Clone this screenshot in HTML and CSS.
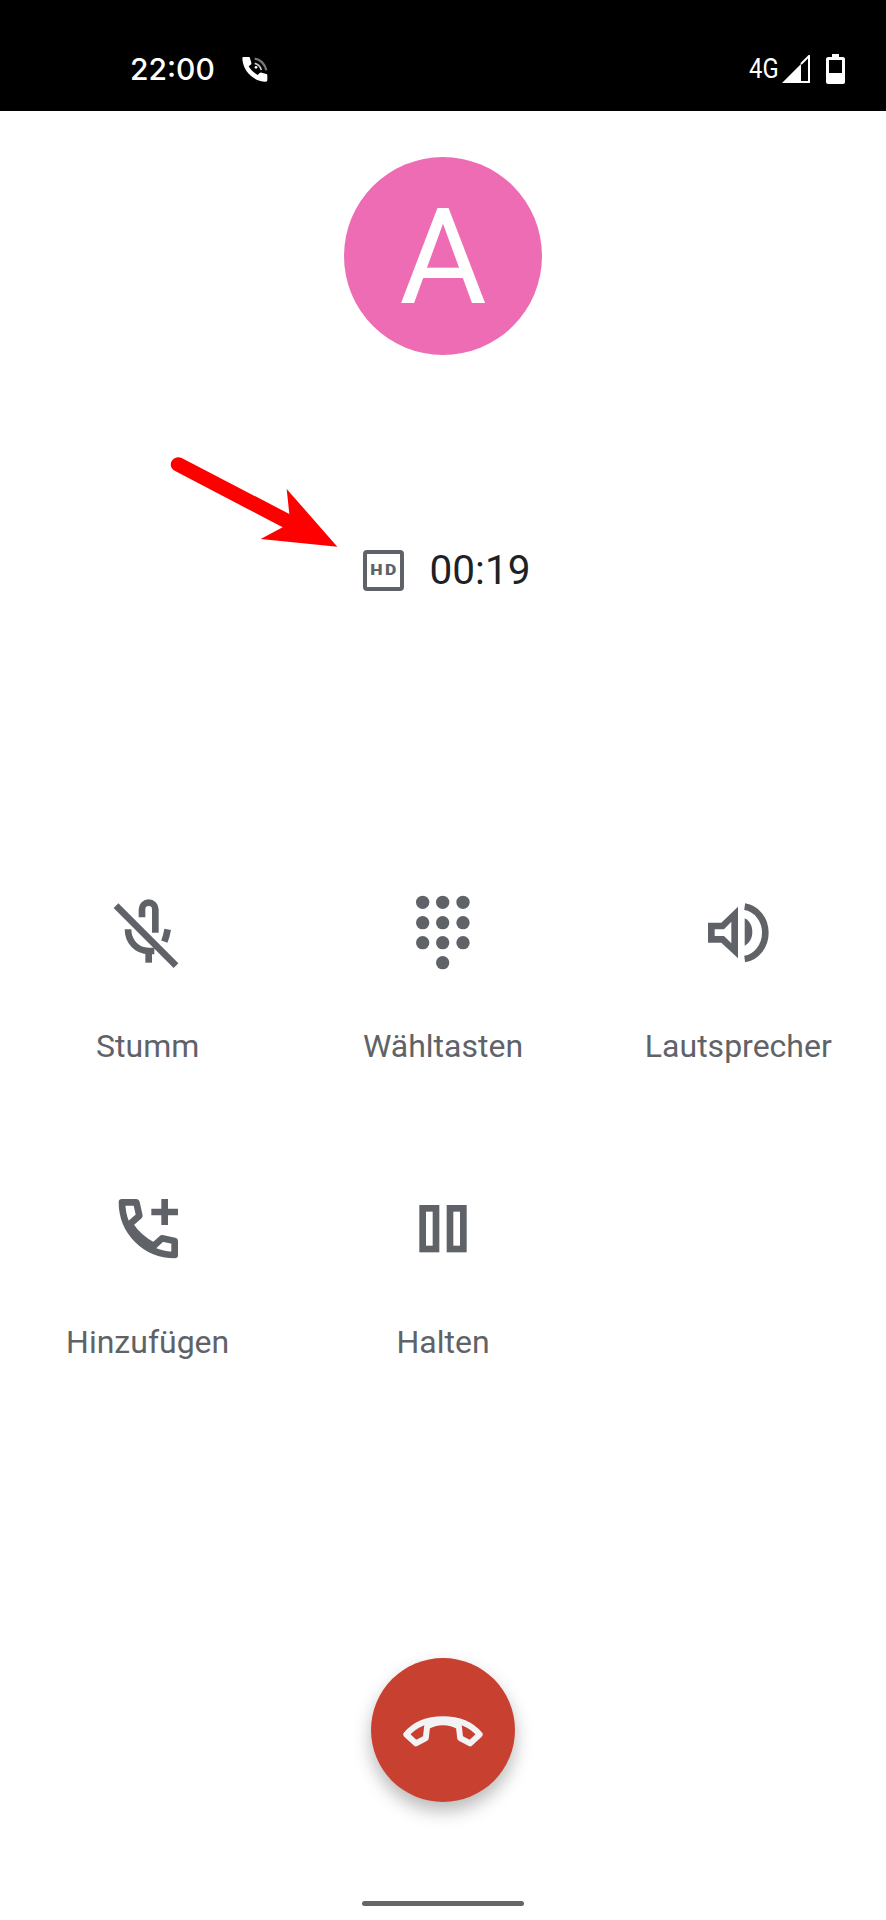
FILE: index.html
```html
<!DOCTYPE html>
<html lang="de">
<head>
<meta charset="utf-8">
<title>Anruf</title>
<link rel="stylesheet" href="styles.css">
</head>
<body>
<div class="page">
  <header class="status">
    <div class="status-left">
      <span class="clock">22:00</span>
      <svg class="call-ind" viewBox="0 0 78 78">
        <path class="ind-fill" d="M4 3 H20 C23 3 24 5 24 7 L28 20 C29 23 27 25 25 27 L20 31 C26 42 36 51 47 57 L53 51 C55 49 57 49 59 50 L73 54 C76 55 76 57 76 59 V72 C76 75 74 77 71 77 C33 76 2 44 1 7 C1 5 2 3 4 3 Z"/>
        <path class="ind-dim" d="M38 8 C55 10 69 24 73 43"/>
        <path class="ind-mid" d="M38 22 C47 24 55 31 58 42"/>
        <circle class="ind-dot" cx="42" cy="34" r="4"/>
      </svg>
    </div>
    <div class="status-right">
      <span class="net">4G</span>
      <svg class="signal" viewBox="0 0 28 28">
        <path class="sig-fill" d="M0 28 L19 9 V28 Z"/>
        <path class="sig-line" d="M19 9 L27 1 V27 H19"/>
      </svg>
      <svg class="battery" viewBox="0 0 19 30">
        <path class="bat-fill" d="M6 0 H13 V3 H17 C18 3 19 4 19 5 V28 C19 29 18 30 17 30 H2 C1 30 0 29 0 28 V5 C0 4 1 3 2 3 H6 Z M3 6 V19 H16 V6 Z"/>
      </svg>
    </div>
  </header>

  <main class="call">
    <div class="avatar">A</div>

    <div class="timer-row">
      <span class="hd-badge"><span class="hd-text">HD</span></span>
      <span class="timer">00:19</span>
    </div>

    <section class="controls">
      <div class="control">
        <svg class="icon" viewBox="-7 0 360 360">
          <path class="st" d="M155 112 V88 a20 20 0 0 1 40 0 V158"/>
          <path class="st" d="M113 148 C113 185 140 213 175 213 H192"/>
          <path class="st" d="M232 148 C230 160 227 172 222 185"/>
          <path class="st" d="M175 213 V248"/>
          <path class="st" d="M77 77 L257 257"/>
        </svg>
        <span class="label">Stumm</span>
      </div>
      <div class="control">
        <svg class="icon" viewBox="-6 0 360 360">
          <circle class="dot" cx="113" cy="67" r="20"/><circle class="dot" cx="173" cy="67" r="20"/><circle class="dot" cx="234" cy="67" r="20"/>
          <circle class="dot" cx="113" cy="128" r="20"/><circle class="dot" cx="173" cy="128" r="20"/><circle class="dot" cx="234" cy="128" r="20"/>
          <circle class="dot" cx="113" cy="188" r="20"/><circle class="dot" cx="173" cy="188" r="20"/><circle class="dot" cx="234" cy="188" r="20"/>
          <circle class="dot" cx="173" cy="248" r="20"/>
        </svg>
        <span class="label">Wähltasten</span>
      </div>
      <div class="control">
        <svg class="icon" viewBox="-5 0 360 360">
          <path class="dot ev" d="M85 128 H125 L175 80 V235 L125 188 H85 Z M105 148 V168 H133 L155 190 V125 L133 148 Z"/>
          <path class="dot" d="M195 115 C210 122 218 138 218 156 C218 174 210 189 195 197 Z"/>
          <path class="st" d="M195 80 C230 85 257 118 257 158 C257 198 230 232 195 237"/>
        </svg>
        <span class="label">Lautsprecher</span>
      </div>
      <div class="control">
        <svg class="icon" viewBox="-7 18 360 360">
          <path class="st round" d="M95 97 H138 L147 137 L118 163 C135 190 160 212 190 228 L215 205 L253 213 V255 C165 255 95 185 95 97 Z"/>
          <path class="st" d="M223 87 V165 M183 126 H263"/>
        </svg>
        <span class="label">Hinzufügen</span>
      </div>
      <div class="control">
        <svg class="icon" viewBox="-6 18 360 360">
          <rect class="st" x="113" y="115" width="40" height="122"/>
          <rect class="st" x="195" y="115" width="40" height="122"/>
        </svg>
        <span class="label">Halten</span>
      </div>
    </section>

    <button class="hangup" type="button" aria-label="Auflegen">
      <svg class="hangup-icon" viewBox="160 230 300 130">
        <path class="hang-line" d="M199 307 C227 274 265 261 310 261 C355 261 393 274 421 307 L392 334 L362 318 L358 283 C330 266 290 266 262 283 L258 318 L228 334 Z"/>
      </svg>
    </button>

    <div class="home-bar"></div>
  </main>

  <svg class="arrow" viewBox="0 0 600 360">
    <path class="arrow-fill" d="M562 320 L410 147 L418 222 L95 54 C85 49 72 52 65 63 C59 74 63 87 74 92 L398 262 L332 297 Z"/>
  </svg>
</div>
</body>
</html>
```

FILE: styles.css
```css
* { box-sizing: border-box; }

html, body {
  margin: 0;
  padding: 0;
  background: #fff;
}

.page {
  position: relative;
  width: 886px;
  height: 1920px;
  overflow: hidden;
  font-family: Roboto, "Liberation Sans", sans-serif;
}

.status {
  height: 111px;
  background: #000;
  color: #fff;
  display: flex;
  align-items: center;
  justify-content: space-between;
  padding: 27px 41px 0 130px;
}

.status-left, .status-right {
  display: flex;
  align-items: center;
}

.clock {
  font-family: Inter, Roboto, sans-serif;
  font-size: 30px;
  font-weight: 500;
  line-height: 36px;
  width: 112px;
}

.call-ind {
  width: 26px;
  height: 26px;
}
.ind-fill { fill: #fff; }
.ind-dim { fill: none; stroke: #777; stroke-width: 7; }
.ind-mid { fill: none; stroke: #ccc; stroke-width: 5; }
.ind-dot { fill: #fff; }

.net {
  display: inline-block;
  font-size: 28px;
  line-height: 30px;
  width: 34px;
  margin-right: 4px;
  transform: scaleX(.85);
  transform-origin: 100% 50%;
}

.signal {
  width: 28px;
  height: 28px;
  margin-right: 16px;
}
.sig-fill { fill: #fff; }
.sig-line { fill: none; stroke: #fff; stroke-width: 2; }

.battery {
  width: 19px;
  height: 30px;
}
.bat-fill { fill: #fff; fill-rule: evenodd; }

.call {
  display: flex;
  flex-direction: column;
  align-items: center;
}

.avatar {
  width: 198px;
  height: 198px;
  margin-top: 46px;
  border-radius: 50%;
  background: #ee6cb4;
  color: #fff;
  font-size: 134px;
  font-weight: 400;
  line-height: 202px;
  text-align: center;
}

.timer-row {
  display: flex;
  align-items: center;
  gap: 26px;
  height: 48px;
  margin-top: 191px;
  margin-left: 7px;
}

.hd-badge {
  display: flex;
  align-items: center;
  justify-content: center;
  width: 41px;
  height: 41px;
  border: 4px solid #5f6368;
  border-radius: 4px;
  color: #5f6368;
}

.hd-text {
  display: inline-block;
  font-family: Roboto, sans-serif;
  font-size: 14px;
  font-weight: 900;
  line-height: 14px;
  letter-spacing: 2px;
  margin-right: -2px;
  transform: scaleX(1.25);
}

.timer {
  color: #202124;
  font-size: 40.5px;
  line-height: 48px;
}

.controls {
  display: grid;
  grid-template-columns: repeat(3, 1fr);
  grid-auto-rows: 296px;
  width: 100%;
  margin-top: 286px;
}

.control {
  display: flex;
  flex-direction: column;
  align-items: center;
}

.icon {
  width: 120px;
  height: 120px;
  margin-bottom: 28px;
}

.st {
  fill: none;
  stroke: #5f6368;
  stroke-width: 20;
}
.round { stroke-linejoin: round; }
.dot { fill: #5f6368; }
.ev { fill-rule: evenodd; }

.label {
  color: #5f6368;
  font-size: 32px;
  line-height: 36px;
  white-space: nowrap;
}

.hangup {
  width: 144px;
  height: 144px;
  margin-top: 186px;
  padding: 0;
  border: 0;
  border-radius: 50%;
  background: #c84130;
  box-shadow: 0 9px 18px rgba(0, 0, 0, .28);
  display: flex;
  align-items: center;
  justify-content: center;
}

.hangup-icon {
  width: 100px;
  height: 43px;
}
.hang-line {
  fill: none;
  stroke: #f1f3f4;
  stroke-width: 18;
  stroke-linejoin: round;
}

.home-bar {
  width: 162px;
  height: 5px;
  margin-top: 99px;
  border-radius: 3px;
  background: #666;
}

.arrow {
  position: absolute;
  left: 150px;
  top: 440px;
  width: 200px;
  height: 120px;
}
.arrow-fill { fill: #ff0000; }
```
